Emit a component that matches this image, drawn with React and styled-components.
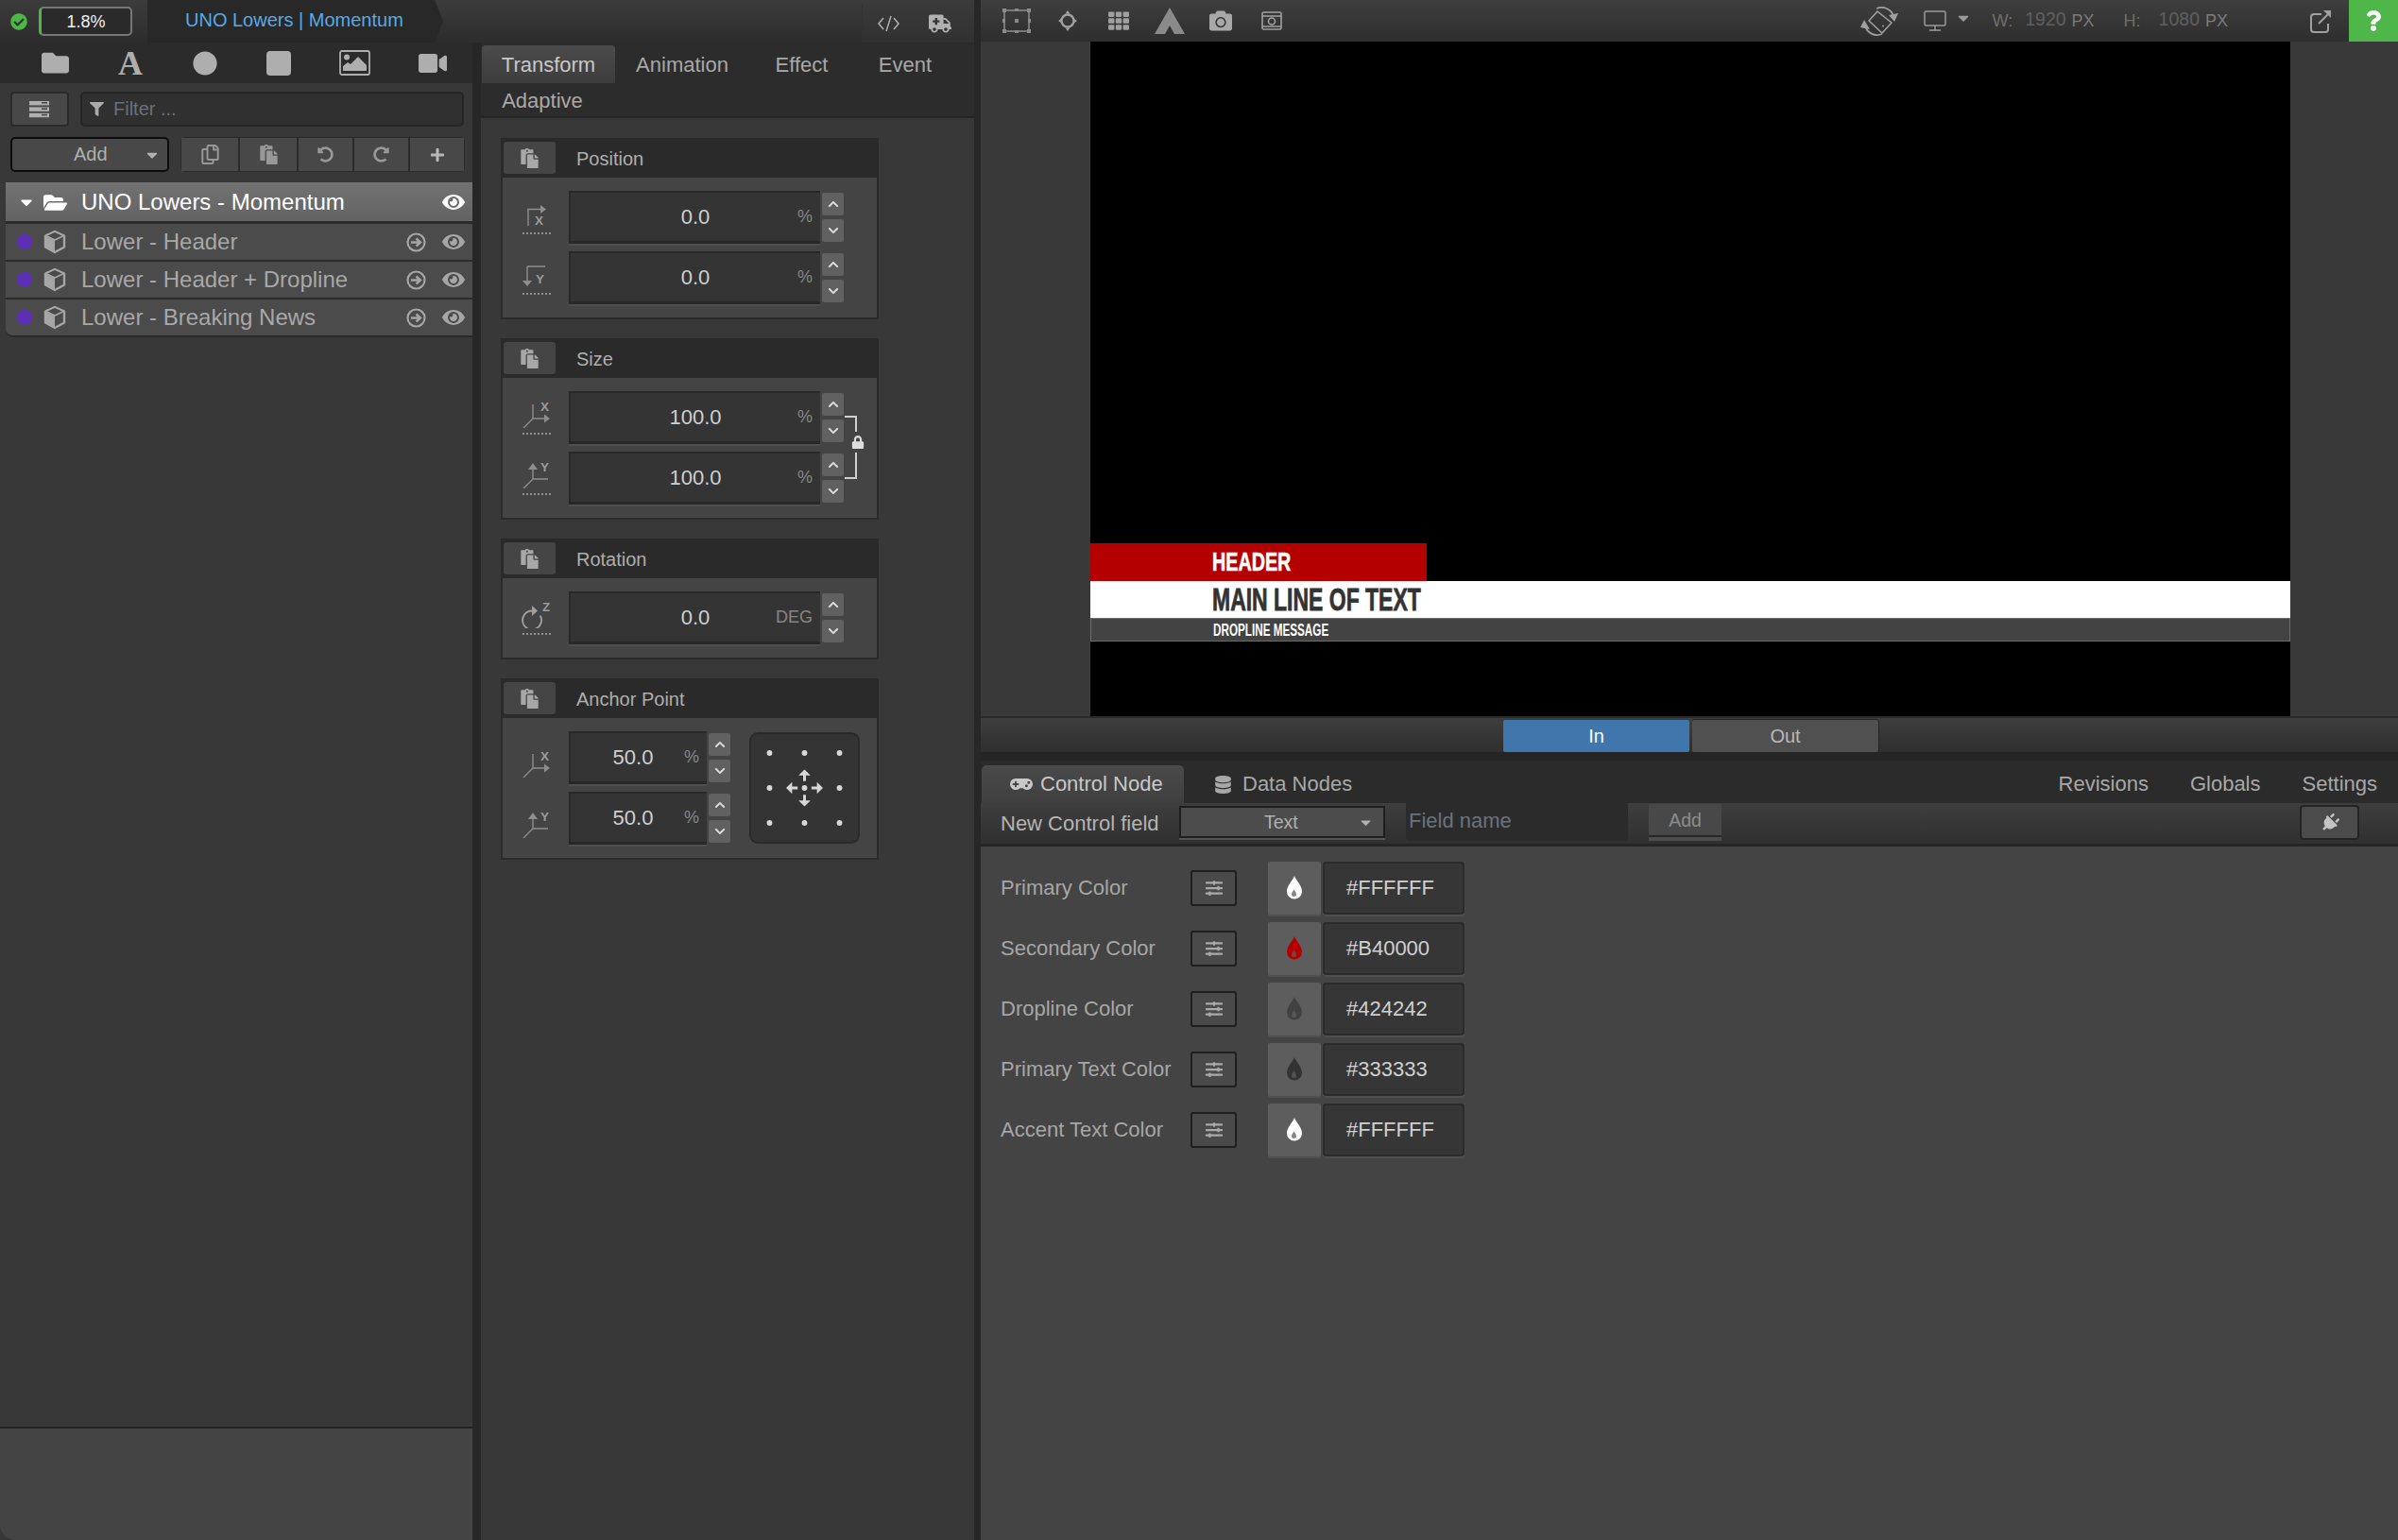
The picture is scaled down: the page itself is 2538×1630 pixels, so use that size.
import React from 'react';
import styled, { createGlobalStyle } from 'styled-components';
import {
  FaCheckCircle, FaFolder, FaFolderOpen, FaCircle, FaVideo, FaFilter, FaCaretDown, FaPlus, FaRegCopy, FaPaste,
  FaUndoAlt, FaRedoAlt, FaEye, FaAmbulance, FaChevronUp, FaChevronDown, FaGamepad, FaDatabase, FaSlidersH, FaPlug,
  FaTh, FaCamera, FaQuestion, FaLock,
} from 'react-icons/fa';

const Global = createGlobalStyle`
  html, body { margin: 0; padding: 0; background: #282828; }
  body { font-family: "Liberation Sans", Arial, sans-serif; }
  * { box-sizing: border-box; }
`;

const Page = styled.div`
  width: 2538px; height: 1630px; display: grid; grid-template-columns: 1031px 1500px; column-gap: 7px;
  background: #272727; overflow: hidden; color: #aaa;
`;
const LeftGroup = styled.div`display: flex; flex-direction: column; height: 1630px;`;
const TopBar = styled.div`
  height: 45px; flex: none; display: flex; align-items: stretch;
  background: linear-gradient(#3c3c3c, #2c2c2c);
`;
const Status = styled.div`
  width: 156px; display: flex; align-items: center; padding-left: 11px; gap: 12px;
  color: #4db848; font-size: 18px;
`;
const Gauge = styled.div`
  width: 99px; height: 31px; border: 2px solid #777; border-left: 3px solid #4db848; border-radius: 5px; background: #2a2a2a;
  color: #f0f0f0; font-size: 18px; display: flex; align-items: center; justify-content: center; padding-top: 2px;
`;
const TitleTab = styled.div`
  width: 313px; background: #282828; color: #5aa9e6; font-size: 20px; padding: 0 0 2px 40px; display: flex; align-items: center;
  clip-path: polygon(0 0, 304px 0, 100% 50%, 304px 100%, 0 100%);
`;
const TopTools = styled.div`
  margin: 4px 0 0 auto; width: 119px; display: flex; align-items: center; gap: 31px; padding: 0 0 0 17px;
  background: linear-gradient(#3a3a3a, #313131); color: #b0b0b0; box-shadow: inset 1px 0 0 #333;
`;
const Panels = styled.div`flex: 1; display: grid; grid-template-columns: 500px 522px; column-gap: 9px; min-height: 0;`;

const LeftPanel = styled.div`display: flex; flex-direction: column; background: #383838; min-height: 0;`;
const IconTabs = styled.div`
  height: 43px; flex: none; background: #2b2b2b; padding-left: 18px; display: grid; grid-template-columns: 80px 80px 78px 78px 82px 84px;
  align-items: center; justify-items: center; color: #aeaeae; font-size: 26px;
`;
const SerifA = styled.span`font-family: "Liberation Serif", serif; font-weight: 700; font-size: 36px; line-height: 1;`;
const ToolRow = styled.div`display: flex; align-items: stretch; margin: ${p => p.$top}px 8px 0 11px; height: 37px; gap: ${p => p.$gap}px;`;
const ListBtn = styled.div`
  width: 62px; background: #484848; border: 2px solid #2a2a2a; border-radius: 4px; display: flex; align-items: center; justify-content: center;
`;
const FilterBox = styled.div`
  flex: 1; margin-right: 1px; background: #303030; border: 2px solid #252525; border-radius: 5px; display: flex; align-items: center; gap: 10px;
  padding-left: 8px; font-size: 20px; color: #69717c;
  svg { color: #aaa; }
`;
const AddBtn = styled.div`
  width: 168px; background: #484848; border: 2px solid #0d0d0d; border-radius: 5px; color: #b0b0b0; font-size: 20px;
  display: flex; align-items: center; position: relative; padding-left: 65px;
  svg { margin-left: 38px; }
`;
const BtnGroup = styled.div`flex: 1; display: grid; grid-template-columns: 60px 60px 57px 57px 1fr; background: #2a2a2a; border-radius: 5px; padding: 1px; gap: 2px;`;
const GroupBtn = styled.div`display: flex; align-items: center; justify-content: center; background: #484848; color: ${p => p.$c || '#989898'};`;
const Tree = styled.div`margin: 11px 0 0 6px; flex: 1;`;
const RootRow = styled.div`
  height: 44px; background: linear-gradient(#727272, #636363); color: #fff; font-size: 24px; display: flex; align-items: center;
  border-bottom: 3px solid #2b2b2b; padding: 1px 8px 0 12px;
`;
const Caret = styled.span`width: 28px; display: flex; font-size: 20px;`;
const RootIcon = styled.span`width: 40px; display: flex; font-size: 25px;`;
const TreeRow = styled.div`
  height: 40px; background: #4b4b4b; color: #a8a8a8; font-size: 24px; display: flex; align-items: center;
  border-bottom: 2px solid #2b2b2b; padding: 0 8px 0 12px;
  &:last-child { border-bottom-left-radius: 8px; }
`;
const Dot = styled.span`width: 16px; height: 16px; border-radius: 50%; background: #5b2fb4; margin-right: 12px;`;
const RowLabel = styled.span`margin-left: ${p => p.$ml ?? 16}px; flex: 1; white-space: nowrap;`;
const RowEnd = styled.span`display: flex; align-items: center; gap: 17px;`;
const BottomBox = styled.div`height: 120px; flex: none; background: #444; border-top: 2px solid #222; border-bottom-left-radius: 16px;`;

const MidPanel = styled.div`display: flex; flex-direction: column; background: #383838;`;
const MidTabs = styled.div`
  height: 80px; flex: none; padding: 3px 0 0 1px; background: #2c2c2c; display: flex; flex-wrap: wrap; align-content: flex-start;
  border-bottom: 2px solid #242424; font-size: 22px;
`;
const MidTab = styled.div`
  width: ${p => p.$w}px; height: ${p => p.$h || 40}px; display: flex; align-items: center; justify-content: center;
  color: ${p => p.$on ? '#c8c8c8' : '#a8a8a8'}; padding-top: 1px; line-height: 1;
  background: ${p => p.$on ? 'linear-gradient(#4b4b4b, #3d3d3d)' : 'transparent'};
  border-radius: ${p => p.$on ? '4px 4px 0 0' : '0'};
`;
const Sections = styled.div`padding: 21px 0 0 21px; display: flex; flex-direction: column; gap: 20px;`;
const Section = styled.section`width: 400px; background: #2a2a2a; padding-bottom: 2px;`;
const SecHead = styled.div`
  height: 42px; padding: 4px 0 4px 3px; display: flex; align-items: center; font-size: 20px; color: #aeaeae; gap: 22px;
  span { padding-top: 2px; }
`;
const CopyBtn = styled.div`
  width: 55px; height: 34px; background: #454545; border-radius: 3px; display: flex; align-items: center; justify-content: center; color: #a8a8a8;
`;
const SecBody = styled.div`
  margin: 0 2px; background: #444; padding: 14px 0 14px 20px; display: flex; gap: 20px;
`;
const Rows = styled.div`position: relative; display: flex; flex-direction: column; gap: 8px;`;
const Row = styled.div`display: flex; align-items: center;`;
const AxisSlot = styled.div`
  width: 32px; margin: ${p => p.$low ? 14 : 0}px 18px 0 0; color: #8e8e8e; display: flex; flex-direction: column; align-items: center;
  svg { display: block; margin-top: -4px; }
`;
const Dotted = styled.span`width: 30px; height: 0; border-top: 2px dotted #909090; margin-top: 5px;`;
const NumInput = styled.div`
  width: ${p => p.$w}px; height: 56px; background: #343434; border: solid #282828; border-width: 2px 0 3px 2px;
  box-shadow: 0 2px 0 #4e4e4e; position: relative; display: flex; align-items: center; justify-content: center;
  padding-right: ${p => p.$pr || 0}px; font-size: 22px; color: #cfcfcf;
`;
const Unit = styled.span`position: absolute; right: 8px; top: 15px; font-size: 18px; color: #868686;`;
const Spin = styled.div`margin-left: 2px; display: flex; flex-direction: column; gap: 4px;`;
const SpinBtn = styled.div`
  width: 23px; height: 24px; background: #616161; border-radius: 2px; color: #ddd; font-size: 12px; display: flex; align-items: center; justify-content: center;
`;
const LockLink = styled.div`
  position: absolute; left: 342px; top: 26px; width: 13px; height: 67px; border: 2px solid #d0d0d0; border-left: 0;
`;
const LockMark = styled.div`
  position: absolute; left: 347px; top: 43px; width: 17px; height: 22px; background: #444; color: #ddd; font-size: 14px;
  display: flex; align-items: center; justify-content: center;
`;
const AnchorPad = styled.div`
  width: 117px; height: 118px; margin-top: 1px; background: #343434; border: 2px solid #2a2a2a; border-radius: 9px; display: flex; align-items: center; justify-content: center;
`;

const RightPanel = styled.div`display: flex; flex-direction: column; height: 1630px; background: #444;`;
const ViewBar = styled.div`
  height: 44px; flex: none; display: flex; align-items: center; padding-left: 11px; background: linear-gradient(#3e3e3e, #2e2e2e);
`;
const ViewSlot = styled.div`width: 54px; display: flex; align-items: center; justify-content: center; color: #8f8f8f;`;
const ViewEnd = styled.div`margin-left: auto; display: flex; align-items: center; height: 44px; color: #9a9a9a;`;
const Metric = styled.span`font-size: 18px; color: #6e6e6e; margin: ${p => p.$m};`;
const MetricNum = styled.span`font-size: 19.5px; color: #5f5f5f; margin-bottom: 3px;`;
const MetricUnit = styled.span`font-size: 18px; color: #7a7a7a; margin-left: 6px;`;
const Spacer = styled.span`width: ${p => p.$w}px;`;
const HelpBtn = styled.div`
  width: 52px; height: 44px; background: #4fb64a; color: #fff; display: flex; align-items: center; justify-content: center; font-size: 22px; margin-left: 18px;
`;
const Stage = styled.div`height: 714px; flex: none; padding-left: 116px; background: #393939;`;
const Canvas = styled.div`width: 1270px; height: 714px; background: #000; padding-top: 531px; overflow: hidden;`;
const LowerHeader = styled.div`width: 356px; height: 40px; background: #b40000; display: flex; align-items: center; padding-left: 129px;`;
const LowerMain = styled.div`height: 39px; background: #fff; display: flex; align-items: center; padding-left: 129px;`;
const LowerDrop = styled.div`height: 25px; background: #434343; border: 1px solid #6c6c6c; display: flex; align-items: center; padding-left: 129px;`;
const Condensed = styled.span`
  display: inline-block; font-family: "Liberation Sans", sans-serif; font-weight: 700; white-space: nowrap;
  font-size: ${p => p.$s}px; color: ${p => p.$c}; transform: scaleX(${p => p.$x}); transform-origin: left center; line-height: 1;
  -webkit-text-stroke: ${p => p.$w}px ${p => p.$c};
`;
const TriggerBar = styled.div`
  margin-top: 2px; height: 36px; flex: none; padding: 2px 0 0 553px; display: flex; gap: 3px; background: linear-gradient(#3e3e3e, #2f2f2f);
  box-shadow: 0 -2px 0 #2a2a2a;
`;
const TrigBtn = styled.div`
  width: 197px; height: 34px; border-radius: 2px; background: ${p => p.$on ? '#3f77ad' : '#505050'}; color: ${p => p.$on ? '#fff' : '#b8b8b8'};
  font-size: 20px; display: flex; align-items: center; justify-content: center; padding-top: 1px;
  box-shadow: ${p => p.$on ? 'none' : '1px 0 0 #222, 0 -1px 0 #222'};
`;
const DarkStrip = styled.div`height: 9px; flex: none; background: #252525;`;
const NodeTabs = styled.div`height: 45px; flex: none; background: #2b2b2b; padding: 5px 22px 0 1px; display: flex; align-items: stretch; font-size: 22px; color: #a8a8a8;`;
const NodeTab = styled.div`
  width: ${p => p.$w}px; padding-left: ${p => p.$pl}px; display: flex; align-items: center; gap: ${p => p.$gap}px;
  color: ${p => p.$on ? '#c8c8c8' : '#a8a8a8'};
  background: ${p => p.$on ? 'linear-gradient(#4a4a4a, #3f3f3f)' : 'transparent'};
  border-radius: ${p => p.$on ? '5px 5px 0 0' : '0'};
`;
const NodeSide = styled.div`margin-left: auto; display: flex; align-items: center; gap: 44px;`;
const FieldBar = styled.div`
  height: 46px; flex: none; display: flex; align-items: flex-start; padding-left: 21px; background: linear-gradient(#3e3e3e, #303030);
  border-bottom: 3px solid #252525; font-size: 22px; color: #b4b4b4;
`;
const FieldTitle = styled.span`width: 189px; margin-top: 9px; white-space: nowrap;`;
const TypeSelect = styled.div`
  width: 218px; height: 34px; margin-top: 3px; background: #4c4c4c; border: 2px solid #1e1e1e; font-size: 19.5px; color: #b0b0b0;
  display: flex; align-items: center; padding-left: 88px; box-shadow: 0 2px 0 #555;
  svg { margin-left: 63px; }
`;
const NameInput = styled.div`
  width: 235px; height: 40px; margin-left: 22px; background: #2b2b2b; border-radius: 0 0 4px 4px; padding: 6px 0 0 3px; font-size: 22px; color: #6b727c;
`;
const GhostAdd = styled.div`
  width: 77px; height: 35px; margin: 1px 0 0 22px; background: #484848; border-bottom: 2px solid #282828; color: #8c8c8c; font-size: 19.5px;
  display: flex; align-items: center; justify-content: center; padding-top: 2px; box-shadow: 0 4px 0 #4c4c4c;
`;
const PlugBtn = styled.div`
  width: 63px; height: 37px; margin: 2px 41px 0 auto; background: #4b4b4b; border: 2px solid #242424; border-radius: 4px; color: #c4c4c4; display: flex; align-items: center; justify-content: center;
`;
const Fields = styled.div`padding: 16px 0 0 21px; display: flex; flex-direction: column; gap: 8px;`;
const FieldRow = styled.div`height: 56px; display: flex; align-items: center;`;
const FieldLabel = styled.span`width: 201px; font-size: 22px; color: #a6a6a6; white-space: nowrap;`;
const TuneBtn = styled.div`
  width: 49px; height: 38px; background: #4a4a4a; border: 2px solid #1f1f1f; border-radius: 3px; color: #aaa; display: flex; align-items: center; justify-content: center;
`;
const Swatch = styled.div`
  width: 56px; height: 56px; margin-left: 33px; background: #5d5d5d; border-radius: 2px; display: flex; align-items: center; justify-content: center;
  box-shadow: 0 2px 0 #4f4f4f;
`;
const HexInput = styled.div`
  width: 150px; height: 56px; margin-left: 2px; background: #363636; border: 2px solid #2b2b2b; border-radius: 4px; padding-left: 23px;
  font-size: 22px; color: #d0d0d0; display: flex; align-items: center; box-shadow: 0 2px 0 #4f4f4f;
`;

const Cube = () => (
  <svg width="24" height="26" viewBox="0 0 24 26" fill="none"><path d="M12 2 22 6.500v12L12 24 2 18.500v-12Z" stroke="#a6a6a6" strokeWidth="2.400" strokeLinejoin="round" /><path d="M2.500 6.500 12 11l9.500-4.500L12 2Z" fill="#4b4b4b" stroke="#a6a6a6" strokeWidth="1.600" /><path d="M2.500 7 12 11.500V24L2.500 18.500Z" fill="#a6a6a6" /></svg>
);
const ArrowCircle = () => (
  <svg width="21" height="21" viewBox="0 0 21 21" fill="none" stroke="#a6a6a6"><circle cx="10.500" cy="10.500" r="9" strokeWidth="2.200" /><path d="M5 10.500h9M10.500 6.500l4.500 4-4.500 4" strokeWidth="2.400" /></svg>
);
const ListLines = () => (
  <svg width="22" height="18" viewBox="0 0 22 18" fill="#b0b0b0"><rect y="0" width="21" height="4.400" /><rect y="6.400" width="21" height="4.400" /><rect y="12.800" width="21" height="4.400" /><rect x="13" y="1" width="6" height="1.600" fill="#484848" /><rect x="13" y="7.400" width="6" height="1.600" fill="#484848" /><rect x="13" y="13.800" width="6" height="1.600" fill="#484848" /></svg>
);
const ImageIcon = () => (
  <svg width="33" height="27" viewBox="0 0 33 27"><rect x="1" y="1" width="31" height="25" rx="2" fill="none" stroke="#aeaeae" strokeWidth="1.800" /><circle cx="8" cy="7.500" r="3" fill="#aeaeae" /><path d="M4 22v-5l5-4 3 2 8-8 9 9v6Z" fill="#aeaeae" /></svg>
);
const RoundSquare = () => <svg width="26" height="26" viewBox="0 0 26 26"><rect width="26" height="26" rx="4" fill="#aeaeae" /></svg>;
const CodeIcon = () => (
  <svg width="23" height="18" viewBox="0 0 23 18" fill="none" stroke="#b0b0b0" strokeWidth="1.500"><path d="M6 3 1 9l5 6M17 3l5 6-5 6M14 1 9 17" /></svg>
);
const PasteIcon = ({ c = '#a8a8a8' }) => <FaPaste size={21} color={c} />;

const axisStyle = { stroke: '#8e8e8e', strokeWidth: 1.4, fill: 'none' };
const AxisLetter = ({ x, y, children }) => (
  <text x={x} y={y} fontFamily="Liberation Sans, sans-serif" fontSize="13.500" fontWeight="700" fill="#9a9a9a">{children}</text>
);
const AxisSvg = ({ children }) => <svg width="36" height="32" viewBox="-2 -4 36 32" style={{ marginLeft: -2, marginRight: -2 }}>{children}</svg>;
const PosXIcon = () => (
  <AxisSvg><path d="M7 26V8.500h14" {...axisStyle} /><path d="M20 4l6 4.500-6 4.500Z" fill="#8e8e8e" /><AxisLetter x="14" y="25">X</AxisLetter></AxisSvg>
);
const PosYIcon = () => (
  <AxisSvg><path d="M6 5v16M6 5h19" {...axisStyle} /><path d="M1 20h10l-5 6Z" fill="#8e8e8e" /><AxisLetter x="15" y="23">Y</AxisLetter></AxisSvg>
);
const SizeXIcon = () => (
  <AxisSvg><path d="M12 3v15L2 28M12 18h13" {...axisStyle} /><path d="M24 13.500l6 4.500-6 4.500Z" fill="#8e8e8e" /><AxisLetter x="20" y="10">X</AxisLetter></AxisSvg>
);
const SizeYIcon = () => (
  <AxisSvg><path d="M12 8v10L2 28M12 18h16" {...axisStyle} /><path d="M7 8 12 1l5 7Z" fill="#8e8e8e" /><AxisLetter x="20" y="10">Y</AxisLetter></AxisSvg>
);
const RotIcon = () => (
  <AxisSvg><path d="M11 9.500A10 10 0 1 0 19.700 14.500" stroke="#a0a0a0" strokeWidth="1.800" fill="none" /><path d="M11 4l6 5.500-6 5.500Z" fill="#a0a0a0" /><AxisLetter x="22" y="10">Z</AxisLetter></AxisSvg>
);
const AnchorGlyph = () => {
  const pts = [[20, 20], [58, 20], [96, 20], [20, 58], [96, 58], [20, 96], [58, 96], [96, 96]];
  return (
    <svg width="116" height="116" viewBox="0 0 116 116" fill="#d8d8d8">
      {pts.map(([x, y]) => <circle key={`${x}-${y}`} cx={x} cy={y} r="3" />)}
      <circle cx="58" cy="58" r="3" />
      <path d="M58 38l6.500 6.500h-5v6h-3v-6h-5ZM58 78l6.500-6.500h-5v-6h-3v6h-5ZM38 58l6.500-6.500v5h6v3h-6v5ZM78 58l-6.500-6.500v5h-6v3h6v5Z" />
    </svg>
  );
};
const CropIcon = () => (
  <svg width="30" height="26" viewBox="0 0 30 26" fill="#8a8a8a"><rect x="2" y="2" width="26" height="22" fill="none" stroke="#8a8a8a" strokeWidth="1.600" /><rect width="4" height="4" /><rect x="26" width="4" height="4" /><rect y="22" width="4" height="4" /><rect x="26" y="22" width="4" height="4" /><rect x="13" y="11" width="4" height="4" /><rect x="13" y="0" width="4" height="3" /><rect x="13" y="23" width="4" height="3" /><rect y="11" width="3" height="4" /><rect x="27" y="11" width="3" height="4" /></svg>
);
const TargetIcon = () => (
  <svg width="20" height="22" viewBox="0 0 20 22" fill="none"><circle cx="10" cy="11" r="6.500" stroke="#a0a0a0" strokeWidth="2.400" /><path d="M10 0l2.500 3.500h-5ZM10 22l2.500-3.500h-5ZM0 11l3.500-2.500v5ZM20 11l-3.500-2.500v5Z" fill="#a0a0a0" /></svg>
);
const PeakIcon = () => (
  <svg width="32" height="28" viewBox="0 0 32 28"><path d="M16 0 32 28H21l-5-9-5 9H0Z" fill="#8a8a8a" /></svg>
);
const RetroCam = () => (
  <svg width="22" height="20" viewBox="0 0 22 20" fill="none" stroke="#a0a0a0"><rect x="1" y="1" width="20" height="18" rx="1.500" strokeWidth="1.600" /><path d="M1 5h20M1 16h20" strokeWidth="1.600" /><circle cx="11" cy="10.500" r="3.500" strokeWidth="1.600" /></svg>
);
const RotateDevice = () => (
  <svg width="40" height="31" viewBox="0 0 40 31" fill="none" stroke="#a0a0a0"><path d="M18 5 9 15l14 13 10-11Z" strokeWidth="1.600" strokeLinejoin="round" /><circle cx="24" cy="20.500" r="1" fill="#a0a0a0" stroke="none" /><path d="M17 2C25-1 33 3 35 10M23 29C15 32 7 28 5 20" strokeWidth="1.800" /><path d="M30 9l10-2-4 9ZM0 22l10 2-6-10Z" fill="#a0a0a0" stroke="none" /></svg>
);
const Monitor = () => (
  <svg width="24" height="24" viewBox="0 0 24 24" fill="none" stroke="#9a9a9a" strokeWidth="1.500"><rect x="1" y="2" width="22" height="15" rx="1.500" /><path d="M12 17v5M6 22h12" /></svg>
);
const External = () => (
  <svg width="23" height="25" viewBox="0 0 23 25" fill="none" stroke="#a0a0a0" strokeWidth="2"><path d="M12 5H4a3 3 0 0 0-3 3v13a3 3 0 0 0 3 3h12a3 3 0 0 0 3-3v-6M9 15 20 4" /><path d="M14 1h8v8Z" fill="#a0a0a0" stroke="none" /></svg>
);
const Drop = ({ c }) => (
  <svg width="18" height="26" viewBox="0 0 18 26"><path d="M9 0c1 4 8 10 8 16.500a8 8 0 0 1-16 0C1 10 8 4 9 0Z" fill={c} /><path d="M8.500 14c.5 2 2.500 3.500 2.500 5.500a2.500 2.500 0 0 1-5 0c0-2 2-3.500 2.500-5.500Z" fill="#5d5d5d" opacity=".75" /></svg>
);

const Copy = () => <CopyBtn><PasteIcon /></CopyBtn>;
const NumField = ({ icon, value, unit = '%', w = 266, pr, dotted = true }) => (
  <Row>
    <AxisSlot $low={!dotted}>{icon}{dotted && <Dotted />}</AxisSlot>
    <NumInput $w={w} $pr={pr}>{value}<Unit>{unit}</Unit></NumInput>
    <Spin>
      <SpinBtn><FaChevronUp /></SpinBtn>
      <SpinBtn><FaChevronDown /></SpinBtn>
    </Spin>
  </Row>
);

const layers = ['Lower - Header', 'Lower - Header + Dropline', 'Lower - Breaking News'];
const colors = [
  ['Primary Color', '#FFFFFF', '#ffffff'],
  ['Secondary Color', '#B40000', '#b40000'],
  ['Dropline Color', '#424242', '#424242'],
  ['Primary Text Color', '#333333', '#333333'],
  ['Accent Text Color', '#FFFFFF', '#ffffff'],
];

export default function App() {
  return (
    <Page>
      <Global />
      <LeftGroup>
        <TopBar>
          <Status><FaCheckCircle size={18} /><Gauge>1.8%</Gauge></Status>
          <TitleTab>UNO Lowers | Momentum</TitleTab>
          <TopTools><CodeIcon /><FaAmbulance size={24} /></TopTools>
        </TopBar>
        <Panels>
          <LeftPanel>
            <IconTabs>
              <FaFolder size={29} />
              <SerifA>A</SerifA>
              <FaCircle size={26} />
              <RoundSquare />
              <ImageIcon />
              <FaVideo size={30} />
            </IconTabs>
            <ToolRow $top={9} $gap={12}>
              <ListBtn><ListLines /></ListBtn>
              <FilterBox><FaFilter size={15} />Filter ...</FilterBox>
            </ToolRow>
            <ToolRow $top={11} $gap={12}>
              <AddBtn>Add<FaCaretDown size={18} /></AddBtn>
              <BtnGroup>
                <GroupBtn><FaRegCopy size={21} /></GroupBtn>
                <GroupBtn><PasteIcon c="#989898" /></GroupBtn>
                <GroupBtn><FaUndoAlt size={17} /></GroupBtn>
                <GroupBtn><FaRedoAlt size={17} /></GroupBtn>
                <GroupBtn $c="#b8b8b8"><FaPlus size={16} /></GroupBtn>
              </BtnGroup>
            </ToolRow>
            <Tree>
              <RootRow>
                <Caret><FaCaretDown /></Caret>
                <RootIcon><FaFolderOpen /></RootIcon>
                <RowLabel $ml={0}>UNO Lowers - Momentum</RowLabel>
                <FaEye size={24} />
              </RootRow>
              {layers.map(name => (
                <TreeRow key={name}>
                  <Dot />
                  <Cube />
                  <RowLabel>{name}</RowLabel>
                  <RowEnd><ArrowCircle /><FaEye size={24} color="#a6a6a6" /></RowEnd>
                </TreeRow>
              ))}
            </Tree>
            <BottomBox />
          </LeftPanel>

          <MidPanel>
            <MidTabs>
              <MidTab $w={141} $on>Transform</MidTab>
              <MidTab $w={142}>Animation</MidTab>
              <MidTab $w={111}>Effect</MidTab>
              <MidTab $w={108}>Event</MidTab>
              <MidTab $w={128} $h={37}>Adaptive</MidTab>
            </MidTabs>
            <Sections>
              <Section>
                <SecHead><Copy /><span>Position</span></SecHead>
                <SecBody>
                  <Rows>
                    <NumField icon={<PosXIcon />} value="0.0" />
                    <NumField icon={<PosYIcon />} value="0.0" />
                  </Rows>
                </SecBody>
              </Section>
              <Section>
                <SecHead><Copy /><span>Size</span></SecHead>
                <SecBody>
                  <Rows>
                    <NumField icon={<SizeXIcon />} value="100.0" />
                    <NumField icon={<SizeYIcon />} value="100.0" />
                    <LockLink />
                    <LockMark><FaLock /></LockMark>
                  </Rows>
                </SecBody>
              </Section>
              <Section>
                <SecHead><Copy /><span>Rotation</span></SecHead>
                <SecBody>
                  <Rows>
                    <NumField icon={<RotIcon />} value="0.0" unit="DEG" />
                  </Rows>
                </SecBody>
              </Section>
              <Section>
                <SecHead><Copy /><span>Anchor Point</span></SecHead>
                <SecBody>
                  <Rows>
                    <NumField icon={<SizeXIcon />} value="50.0" w={146} pr={12} dotted={false} />
                    <NumField icon={<SizeYIcon />} value="50.0" w={146} pr={12} dotted={false} />
                  </Rows>
                  <AnchorPad><AnchorGlyph /></AnchorPad>
                </SecBody>
              </Section>
            </Sections>
          </MidPanel>
        </Panels>
      </LeftGroup>

      <RightPanel>
        <ViewBar>
          <ViewSlot><CropIcon /></ViewSlot>
          <ViewSlot><TargetIcon /></ViewSlot>
          <ViewSlot><FaTh size={22} color="#a0a0a0" /></ViewSlot>
          <ViewSlot><PeakIcon /></ViewSlot>
          <ViewSlot><FaCamera size={24} color="#a8a8a8" /></ViewSlot>
          <ViewSlot><RetroCam /></ViewSlot>
          <ViewEnd>
            <RotateDevice />
            <Spacer $w={27} />
            <Monitor />
            <FaCaretDown size={18} style={{ margin: '0 22px 6px 9px' }} />
            <Metric $m="0 13px 0 0">W:</Metric>
            <MetricNum>1920</MetricNum>
            <MetricUnit>PX</MetricUnit>
            <Metric $m="0 19px 0 31px">H:</Metric>
            <MetricNum>1080</MetricNum>
            <MetricUnit>PX</MetricUnit>
            <Spacer $w={87} />
            <External />
            <HelpBtn><FaQuestion /></HelpBtn>
          </ViewEnd>
        </ViewBar>
        <Stage>
          <Canvas>
            <LowerHeader><Condensed $s={28} $c="#fff" $x={0.705} $w={0.6}>HEADER</Condensed></LowerHeader>
            <LowerMain><Condensed $s={33} $c="#333" $x={0.696} $w={0.8}>MAIN LINE OF TEXT</Condensed></LowerMain>
            <LowerDrop><Condensed $s={18} $c="#fff" $x={0.65} $w={0}>DROPLINE MESSAGE</Condensed></LowerDrop>
          </Canvas>
        </Stage>
        <TriggerBar>
          <TrigBtn $on>In</TrigBtn>
          <TrigBtn>Out</TrigBtn>
        </TriggerBar>
        <DarkStrip />
        <NodeTabs>
          <NodeTab $w={214} $pl={30} $gap={8} $on><FaGamepad size={24} />Control Node</NodeTab>
          <NodeTab $w={200} $pl={32} $gap={11}><FaDatabase size={19} />Data Nodes</NodeTab>
          <NodeSide><span>Revisions</span><span>Globals</span><span>Settings</span></NodeSide>
        </NodeTabs>
        <FieldBar>
          <FieldTitle>New Control field</FieldTitle>
          <TypeSelect>Text<FaCaretDown size={17} /></TypeSelect>
          <NameInput>Field name</NameInput>
          <GhostAdd>Add</GhostAdd>
          <PlugBtn><FaPlug size={20} style={{ transform: 'rotate(45deg)' }} /></PlugBtn>
        </FieldBar>
        <Fields>
          {colors.map(([label, hex, color]) => (
            <FieldRow key={label}>
              <FieldLabel>{label}</FieldLabel>
              <TuneBtn><FaSlidersH size={18} /></TuneBtn>
              <Swatch><Drop c={color} /></Swatch>
              <HexInput>{hex}</HexInput>
            </FieldRow>
          ))}
        </Fields>
      </RightPanel>
    </Page>
  );
}
